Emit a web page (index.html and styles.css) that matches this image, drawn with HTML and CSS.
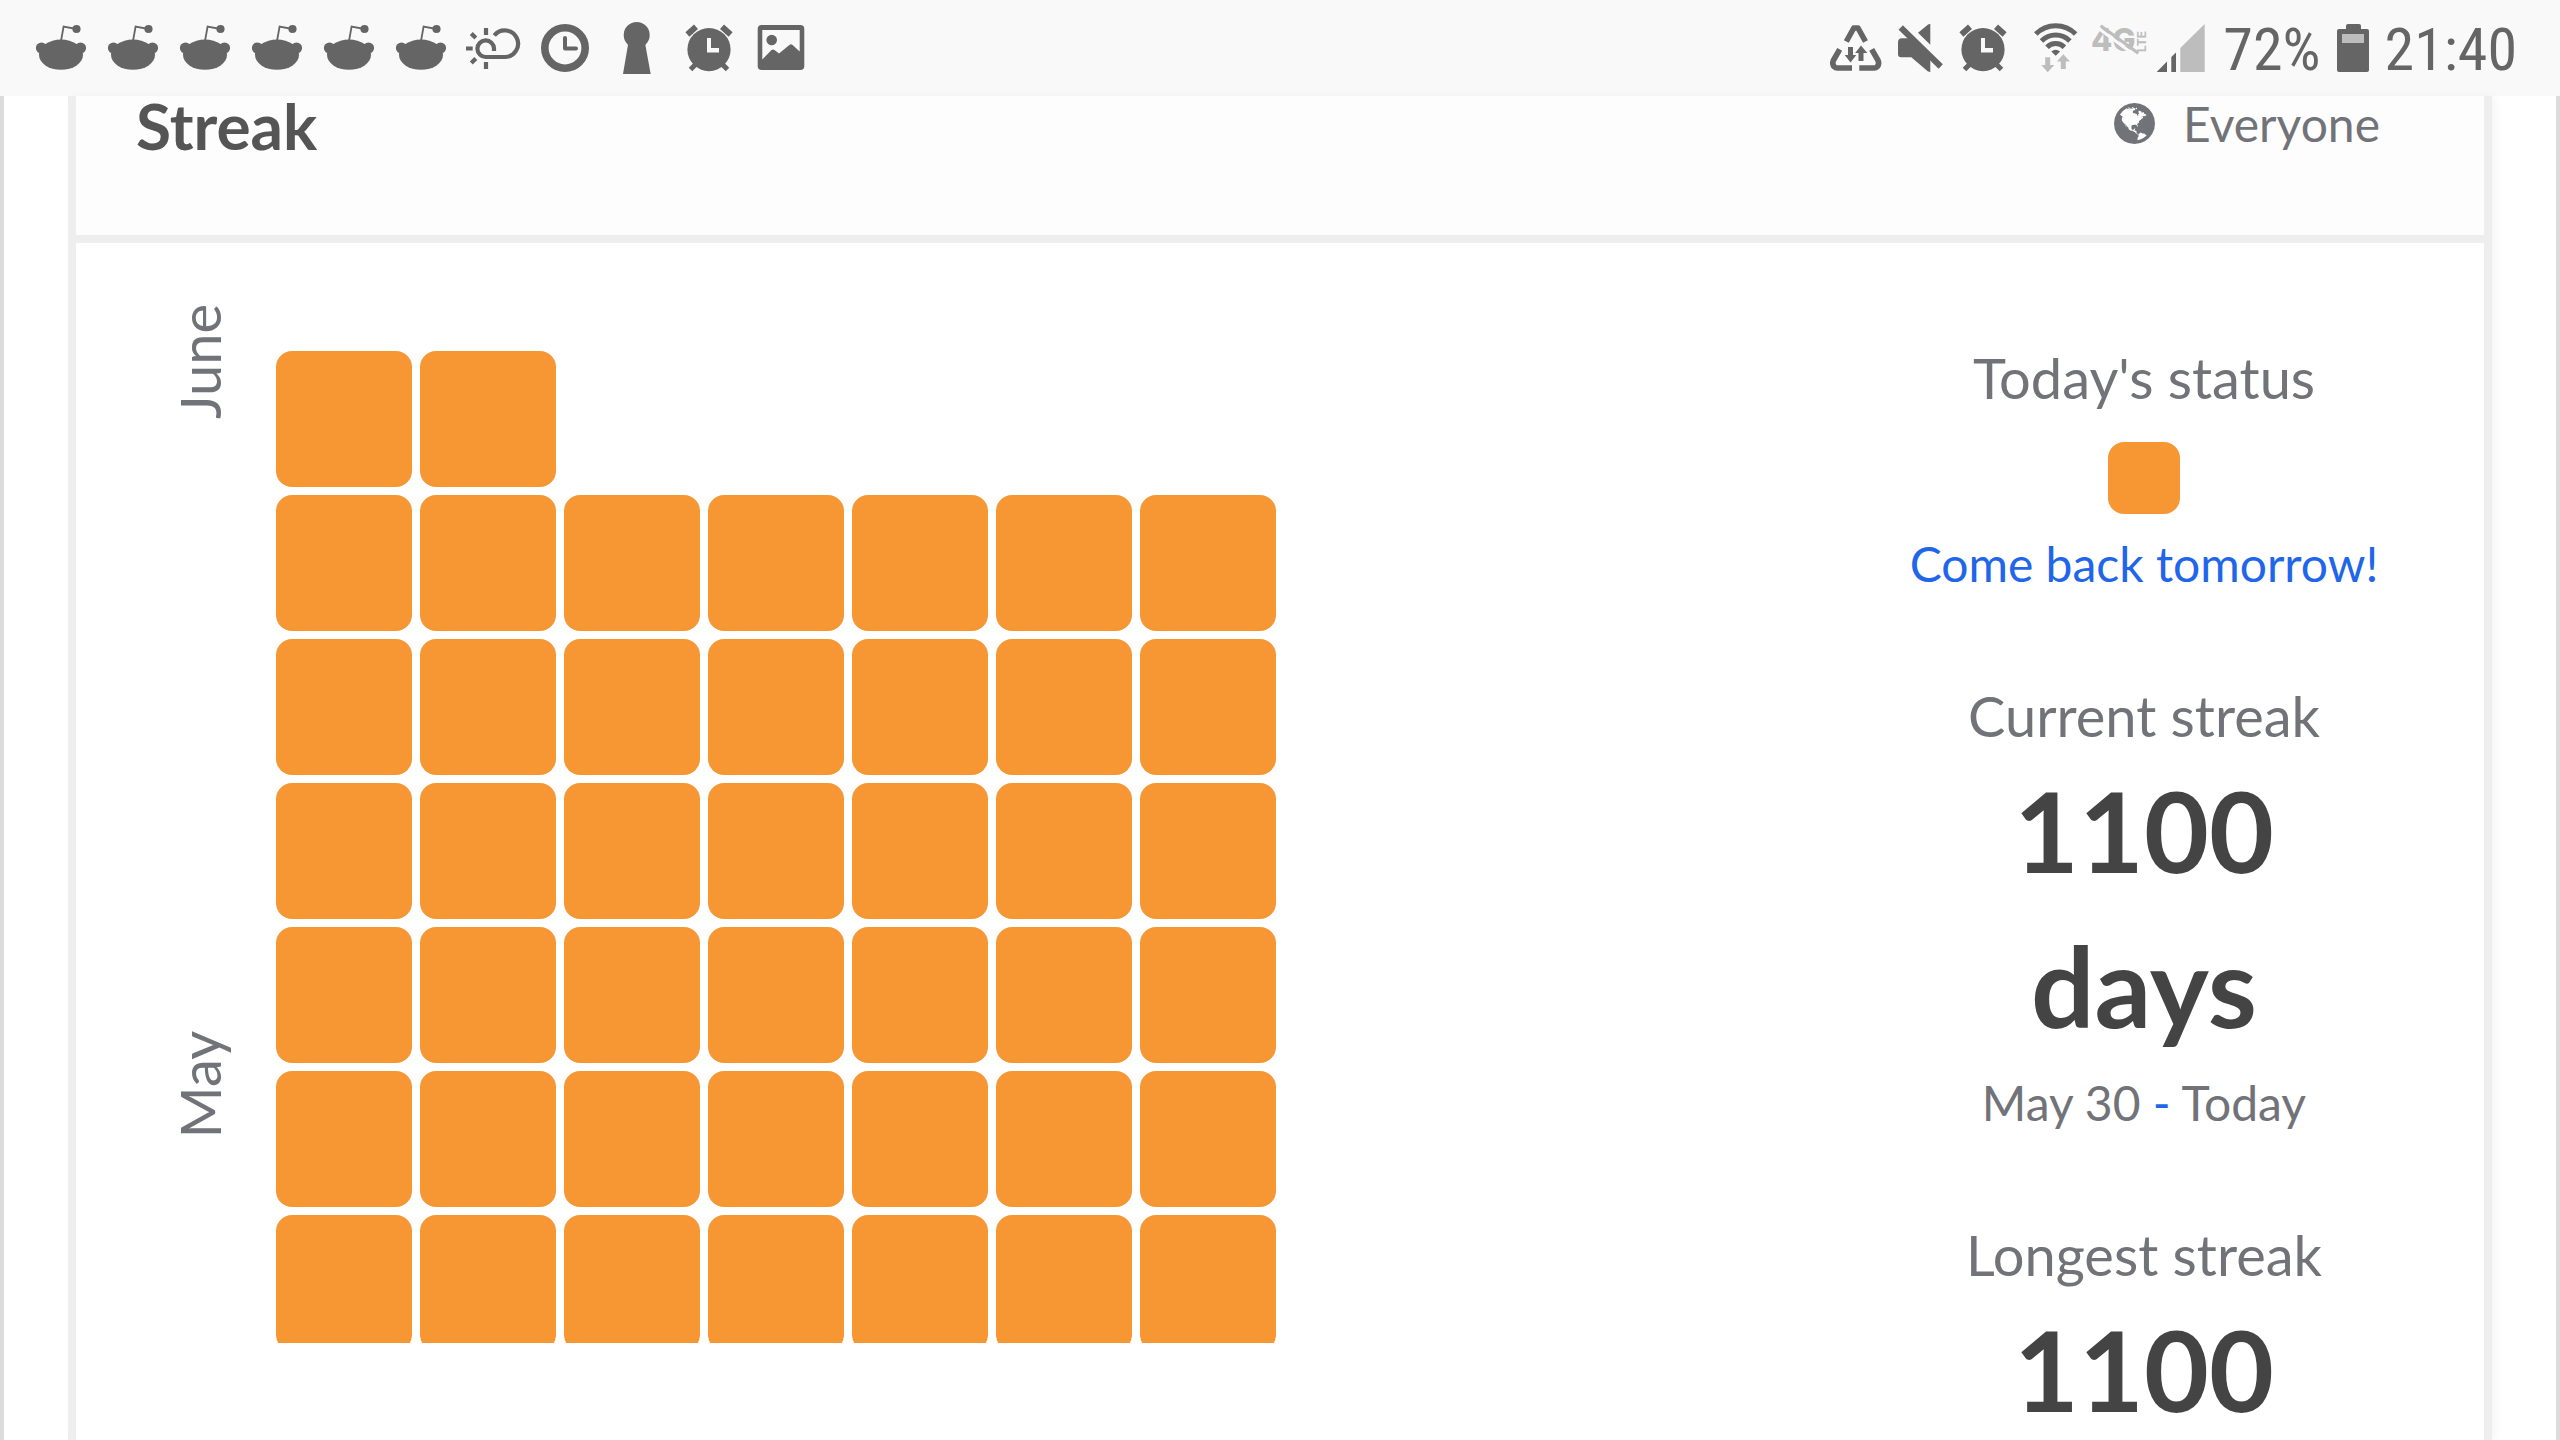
FILE: index.html
```html
<!DOCTYPE html>
<html lang="en">
<head>
<meta charset="utf-8">
<meta name="viewport" content="width=device-width, initial-scale=1">
<title>Streak</title>
<link rel="stylesheet" href="styles.css">
</head>
<body>
<svg class="defs" aria-hidden="true">
  <symbol id="alien" viewBox="0 0 72 96">
    <ellipse cx="36" cy="54.7" rx="22" ry="15.1"/>
    <circle cx="16.5" cy="48" r="5.6"/>
    <circle cx="55.5" cy="48" r="5.6"/>
    <circle cx="51.5" cy="29" r="4.1"/>
    <path class="line" stroke-width="1.8" d="M36 41 38.6 26.5 51.5 29"/>
  </symbol>
  <symbol id="alarm" viewBox="0 0 72 96">
    <circle cx="36" cy="49.6" r="21.6"/>
    <path class="line" stroke-width="6" d="M14.4 34.5 23 26.8M49 26.8l8.600 7.700"/>
    <path class="line" stroke-width="5" d="M17.500 69.500l6-6M54.500 69.500l-6-6"/>
    <path fill="#f9f9f9" d="M34 38h4v10h8v4.500H34z"/>
  </symbol>
</svg>

<header class="statusbar">
  <div class="notifications">
    <svg class="slot"><use href="#alien"/></svg>
    <svg class="slot"><use href="#alien"/></svg>
    <svg class="slot"><use href="#alien"/></svg>
    <svg class="slot"><use href="#alien"/></svg>
    <svg class="slot"><use href="#alien"/></svg>
    <svg class="slot"><use href="#alien"/></svg>
    <svg class="slot" viewBox="0 0 72 96">
      <path class="line" stroke-width="4.200" d="M37 51V48.500A8.300 8.300 0 1 0 29 57H47.500A13.300 13.300 0 1 0 37.300 35.500M29 28v7M29 62v7M9 48.500h6.700M14.300 33.500l4.500 4.500M14.300 63l4.500-4.500"/>
    </svg>
    <svg class="slot" viewBox="0 0 72 96">
      <circle class="line" cx="36" cy="48" r="20.200" stroke-width="7.600"/>
      <path class="line" stroke-width="4" stroke-linecap="round" stroke-linejoin="round" d="M36 38v10.500h11"/>
    </svg>
    <svg class="slot" viewBox="0 0 72 96">
      <circle cx="35.700" cy="35" r="13"/>
      <path d="M27.300 43H44l5.700 31H22z"/>
    </svg>
    <svg class="slot"><use href="#alarm"/></svg>
    <svg class="slot" viewBox="0 0 72 96">
      <path fill-rule="evenodd" d="M16.700 25h38.600a4 4 0 0 1 4 4v37a4 4 0 0 1-4 4H16.700a4 4 0 0 1-4-4V29a4 4 0 0 1 4-4zM17.300 30v29.500l9.200-9.500q1.500-1.200 3 0l4.500 3.500 10.400-8.600q1.600-1.300 3.200 0l7.100 6.600V30z"/>
      <circle cx="26.700" cy="40" r="5.300"/>
    </svg>
  </div>
  <div class="system">
    <svg class="sys" viewBox="0 0 64 96">
      <path class="line" stroke-width="5.600" stroke-linejoin="round" d="M22.300 41.500 29.800 28h4.200l7.500 13.500M15.700 49.300 9.300 60.500q-1.500 3.500 1 6.300 1 1.200 3 1.200H28M47.700 49.300l6.400 11.200q1.500 3.500-1 6.300-1 1.200-3 1.200H35.300"/>
      <path d="M24 47h5v8h3.300l-5.800 7.500L20.700 55H24zM34.500 61h5v-8h3.800L37 45.500 31.200 53h3.300z"/>
    </svg>
    <svg class="sys" viewBox="0 0 64 96">
      <path d="M42.300 24v20.700L30 32.700l9.800-8q1.500-1 2.500-.7zM18 38.300h4L42.300 58v14q-1.300 0-2.600-.8L23.300 57.300H13q-3 0-3-3V42.300q0-4 4-4z"/>
      <path class="line" stroke-width="6" d="M12.700 27.500l40 39"/>
    </svg>
    <svg class="sys" viewBox="5 0 64 96"><use href="#alarm" width="72" height="96"/></svg>
    <svg class="slot" viewBox="0 0 72 96">
      <path class="line" stroke-width="5" d="M19.800 34a28 28 0 0 1 39.800 0M25.500 41a20 20 0 0 1 28.400 0M31 47.200a12.200 12.200 0 0 1 17.400 0"/>
      <path d="M35.300 51.500q4.400-3.600 8.800 0l-4.400 4.200z"/>
      <path class="light" d="M29.200 57.300h5V65h4.100l-6.600 7.300L25.300 65h3.900zM44.800 69h5v-7.500h4.200l-6.700-7.200-6.400 7.200h3.900z"/>
    </svg>
    <svg class="sys light" viewBox="0 0 64 96">
      <text class="net" x="3" y="51">4G</text>
      <text class="lte" transform="translate(58 52) rotate(-90)">LTE</text>
      <path stroke="#f9f9f9" stroke-width="3" d="M10 28l37 27.500"/>
      <path stroke="#bdbdbd" stroke-width="3" d="M12.700 25.700l37.600 27.600"/>
    </svg>
    <svg class="signal" viewBox="0 0 56 96">
      <path d="M4.700 72H15V61.500zM19.300 72H24V52.500l-4.700 4.500z"/>
      <path class="light" d="M28.300 72V48L52.700 24v48z"/>
    </svg>
    <span class="reading">72%</span>
    <svg class="battery" viewBox="0 0 32 96">
      <path d="M9 29v-3q0-2 2-2h11q2 0 2 2v3h6q2 0 2 2v39q0 2-2 2H2q-2 0-2-2V31q0-2 2-2z"/>
      <path class="light" d="M5 34h22v9H5z"/>
    </svg>
    <time class="reading">21:40</time>
  </div>
</header>

<main class="page">
  <section class="card">
    <header class="card-head">
      <h1 class="title">Streak</h1>
      <div class="audience">
        <svg class="globe" viewBox="128 128 1536 1536" aria-hidden="true"><path d="M896 128q209 0 385.500 103t279.500 279.500 103 385.500-103 385.500-279.500 279.500-385.500 103-385.500-103-279.500-279.500-103-385.500 103-385.500 279.500-279.500 385.500-103zm274 521q-2 1-9.500 9.500t-13.500 9.500q2 0 4.500-5t5-11 3.500-7q6-7 22-15 14-6 52-12 34-8 51 11-2-2 9.500-13t14.500-12q3-2 15-4.500t15-7.500l2-22q-12 1-17.500-7t-6.500-21q0 2-6 8 0-7-4.500-8t-11.500 1-9 1q-10-3-15-7.500t-8-16.500-4-15q-2-5-9.500-11t-9.500-10q-1-2-2.500-5.500t-3-6.500-4-5.500-5.500-2.500-7 5-7.500 10-4.500 5q-3-2-6-1.500t-4.500 1-4.500 3-5 3.500q-3 2-8.500 3t-8.500 2q15-5-1-11-10-4-16-3 9-4 7.500-12t-8.500-14h5q-1-4-8.500-8.500t-17.500-8.500-13-6q-8-5-34-9.500t-33-.5q-5 6-4.500 10.500t4 14 3.500 12.500q1 6-5.500 13t-6.500 12q0 7 14 15.500t10 21.500q-3 8-16 16t-16 12q-5 8-1.500 18.500t10.500 16.500q2 2 1.500 4t-3.500 4.500-5.500 4-6.500 3.500l-3 2q-11 5-20.500-6t-13.500-26q-7-25-16-30-23-8-29 1-5-13-41-26-25-9-58-4 6-1 0-15-7-15-19-12 3-6 4-17.500t1-13.500q3-13 12-23 1-1 7-8.500t9.500-13.500.5-6q35 4 50-11 5-5 11.500-17t10.500-17q9-6 14-5.500t14.500 5.500 14.500 5q14 1 15.500-11t-7.500-20q12 1 3-17-4-7-8-9-12-4-27 5-8 4 2 8-1-1-9.500 10.500t-16.500 17.500-16-5q-1-1-5.500-13.500t-9.500-13.500q-8 0-16 15 3-8-11-15t-24-8q19-12-8-27-7-4-20.500-5t-19.500 4q-5 7-5.500 11.500t5 8 10.500 5.500 11.500 4 8.500 3q14 10 8 14-2 1-8.500 3.500t-11.500 4.500-6 4q-3 4 0 14t-2 14q-5-5-9-17.500t-7-16.500q7 9-25 6l-10-1q-4 0-16 2t-20.500 1-13.500-8q-4-8 0-20 1-4 4-2-4-3-11-9.500t-10-8.500q-46 15-94 41 6 1 12-1 5-2 13-6.500t10-5.500q34-14 42-7l5-5q14 16 20 25-7-4-30-1-20 6-22 12 7 12 5 18-4-3-11.500-10t-14.500-11-15-5q-16 0-22 1-146 80-235 222 7 7 12 8 4 1 5 9t2.500 11 11.500-3q9 8 3 19 1-1 44 27 19 17 21 21 3 11-10 18-1-2-9-9t-9-4q-3 5 .5 18.500t10.500 12.500q-7 0-9.500 16t-2.500 35.500-1 23.500l2 1q-3 12 5.500 34.500t21.500 19.500q-13 3 20 43 6 8 8 9 3 2 12 7.500t15 10 10 10.500q4 5 10 22.500t14 23.500q-2 6 9.500 20t10.500 23q-1 0-2.500 1t-2.500 1q3 7 15.500 14t15.500 13q1 3 2 10t3 11 8 2q2-20-24-62-15-25-17-29-3-5-5.500-15.500t-4.500-14.500q2 0 6 1.500t8.500 3.500 7.500 4 2 3q-3 7 2 17.500t12 18.500 17 19 12 13q6 6 14 19.500t0 13.500q9 0 20 10.500t17 19.500q5 8 8 26t5 24q2 7 8.500 13.500t12.500 9.500l16 8 13 7q5 2 18.500 10.500t21.500 11.500q10 4 16 4t14.500-2.500 13.500-3.500q15-2 29 15t21 21q36 19 55 11-2 1 .5 7.500t8 15.500 9 14.500 5.500 8.500q5 6 18 15t18 15q6-4 7-9-3 8 7 20t18 10q14-3 14-32-31 15-49-18 0-1-2.500-5.500t-4-8.500-2.500-8.500 0-7.500 5-3q9 0 10-3.500t-2-12.500-4-13q-1-8-11-20t-12-15q-5 9-16 8t-16-9q0 1-1.500 5.500t-1.500 6.500q-13 0-15-1 1-3 2.500-17.500t3.500-22.500q1-4 5.500-12t7.500-14.500 4-12.500-4.500-9.500-17.500-2.500q-19 1-26 20-1 3-3 10.500t-5 11.500-9 7q-7 3-24 2t-24-5q-13-8-22.500-29t-9.500-37q0-10 2.500-26.500t3-25-5.500-24.500q3-2 9-9.500t10-10.500q2-1 4.500-1.500t4.500 0 4-1.500 3-6q-1-1-4-3-3-3-4-3 7 3 28.500-1.500t27.500 1.500q15 11 22-2 0-1-2.500-9.500t-.5-13.500q5 27 29 9 3 3 15.500 5t17.500 5q3 2 7 5.500t5.500 4.500 5-.5 8.500-6.500q10 14 12 24 11 40 19 44 7 3 11 2t4.500-9.500 0-14-1.500-12.500l-1-8v-18l-1-8q-15-3-18.500-12t1.500-18.500 15-18.500q1-1 8-3.500t15.500-6.500 12.500-8q21-19 15-35 7 0 11-9-1 0-5-3t-7.500-5-4.500-2q9-5 2-16 5-3 7.500-11t7.500-10q9 12 21 2 7-8 1-16 5-7 20.500-10.500t18.500-9.500q7 2 8-2t1-12 3-12q4-5 15-9t13-5l17-11q3-4 0-4 18 2 31-11 10-11-6-20 3-6-3-9.500t-15-5.500q3-1 11.500-.5t10.500-1.500q15-10-7-16-17-5-43 12zm-163 877q206-36 351-189-3-3-12.500-4.500t-12.500-3.500q-18-7-24-8 1-7-2.500-13t-8-9-12.500-8-11-7q-2-2-7-6t-7-5.500-7.500-4.500-8.500-2-10 1l-3 1q-3 1-5.500 2.500t-5.500 3-4 3 0 2.500q-21-17-36-22-5-1-11-5.500t-10.500-7-10-1.500-11.500 7q-5 5-6 15t-2 13q-7-5 0-17.500t2-18.500q-3-6-10.500-4.500t-12 4.500-11.500 8.500-9 6.500-8.500 5.500-8.500 7.500q-3 4-6 12t-5 11q-2-4-11.500-6.500t-9.500-5.500q2 10 4 35t5 38q7 31-12 48-27 25-29 40-4 22 12 26 0 7-8 20.500t-7 21.500q0 6 2 16z"/></svg>
        <span>Everyone</span>
      </div>
    </header>
    <div class="card-body">
      <div class="months">
        <span class="month">June</span>
        <span class="month">May</span>
      </div>
      <div class="calendar">
        <i class="day"></i><i class="day week-end"></i>
        <i class="day"></i><i class="day"></i><i class="day"></i><i class="day"></i><i class="day"></i><i class="day"></i><i class="day"></i>
        <i class="day"></i><i class="day"></i><i class="day"></i><i class="day"></i><i class="day"></i><i class="day"></i><i class="day"></i>
        <i class="day"></i><i class="day"></i><i class="day"></i><i class="day"></i><i class="day"></i><i class="day"></i><i class="day"></i>
        <i class="day"></i><i class="day"></i><i class="day"></i><i class="day"></i><i class="day"></i><i class="day"></i><i class="day"></i>
        <i class="day"></i><i class="day"></i><i class="day"></i><i class="day"></i><i class="day"></i><i class="day"></i><i class="day"></i>
        <i class="day"></i><i class="day"></i><i class="day"></i><i class="day"></i><i class="day"></i><i class="day"></i><i class="day"></i>
      </div>
      <div class="summary">
        <section class="stat">
          <h2 class="label">Today's status</h2>
          <i class="today"></i>
          <p class="note accent">Come back tomorrow!</p>
        </section>
        <section class="stat">
          <h2 class="label">Current streak</h2>
          <p class="value">1100 days</p>
          <p class="note">May 30 <span class="accent">-</span> Today</p>
        </section>
        <section class="stat">
          <h2 class="label">Longest streak</h2>
          <p class="value">1100</p>
        </section>
      </div>
    </div>
  </section>
</main>
</body>
</html>
```

FILE: styles.css
```css
* {
  box-sizing: border-box;
}

body {
  margin: 0;
  height: 100vh;
  overflow: hidden;
  display: flex;
  flex-direction: column;
  background: #fff;
  color: #727379;
  font-family: Lato, sans-serif;
}

h1,
h2,
p {
  margin: 0;
  font-weight: 400;
}

svg {
  flex: none;
  display: block;
}

.defs {
  width: 0;
  height: 0;
  position: absolute;
}

/* Status bar */
.statusbar {
  flex: none;
  height: 96px;
  display: flex;
  justify-content: space-between;
  padding: 0 43px 0 25px;
  background: #f9f9f9;
  color: #656565;
  fill: #656565;
}

.notifications,
.system {
  display: flex;
  align-items: center;
}

.slot {
  width: 72px;
  height: 96px;
}

.sys {
  width: 64px;
  height: 96px;
}

.signal {
  width: 56px;
  height: 96px;
}

.battery {
  width: 32px;
  height: 96px;
  margin: 0 16px;
}

.line {
  fill: none;
  stroke: #656565;
}

.light {
  fill: #bdbdbd;
}

.net {
  font: 800 31px Inter, sans-serif;
}

.lte {
  font: 700 12px Inter, sans-serif;
}

.reading {
  padding-top: 4px;
  font-family: "Roboto Condensed", Roboto, sans-serif;
  font-size: 60px;
  line-height: 92px;
}

.signal + .reading {
  margin-left: 15px;
}

/* Page */
.page {
  flex: 1;
  min-height: 0;
  display: flex;
  padding: 0 64px;
  border: solid #dcdcde;
  border-width: 0 4px;
}

.card {
  flex: 1;
  border: solid #eee;
  border-width: 0 8px;
  box-shadow: 4px 0 8px rgba(0, 0, 0, 0.04);
}

.card-head {
  height: 147px;
  display: flex;
  justify-content: space-between;
  align-items: flex-start;
  padding: 0 104px 0 60px;
  background: #fdfdfd;
  border-bottom: 8px solid #eee;
}

.title {
  font-size: 64px;
  font-weight: 700;
  line-height: 60px;
  color: #555;
}

.audience {
  display: flex;
  align-items: center;
  gap: 28px;
  font-size: 48px;
  line-height: 55px;
}

.globe {
  width: 41px;
  height: 41px;
  fill: #727379;
}

.card-body {
  display: flex;
  align-items: flex-start;
  padding: 0 100px 0 88px;
}

.months {
  display: flex;
  flex-direction: column;
  gap: 612px;
  padding-top: 61px;
}

.month {
  writing-mode: vertical-rl;
  transform: rotate(180deg);
  font-size: 56px;
  line-height: 72px;
}

.calendar {
  display: grid;
  grid-template-columns: repeat(7, 136px);
  grid-auto-rows: 136px;
  gap: 8px;
  max-height: 992px;
  overflow: hidden;
  margin: 108px 0 0 40px;
}

.day {
  border-radius: 16px;
  background: #f79733;
}

/* the newest week ends here, so the next day opens a row */
.week-end + .day {
  grid-column-start: 1;
}

.summary {
  width: 480px;
  margin-left: auto;
  padding-top: 99px;
  display: flex;
  flex-direction: column;
  gap: 80px;
  text-align: center;
}

.label {
  font-size: 56px;
  line-height: 72px;
}

.today {
  display: block;
  width: 72px;
  height: 72px;
  margin: 28px auto 14px;
  border-radius: 16px;
  background: #f79733;
}

.note {
  font-size: 48px;
  line-height: 72px;
}

.value {
  font-size: 112px;
  font-weight: 700;
  line-height: 155px;
  color: #444;
}

.value + .note {
  margin-top: 5px;
}

.accent {
  color: #1f66ea;
}
```
